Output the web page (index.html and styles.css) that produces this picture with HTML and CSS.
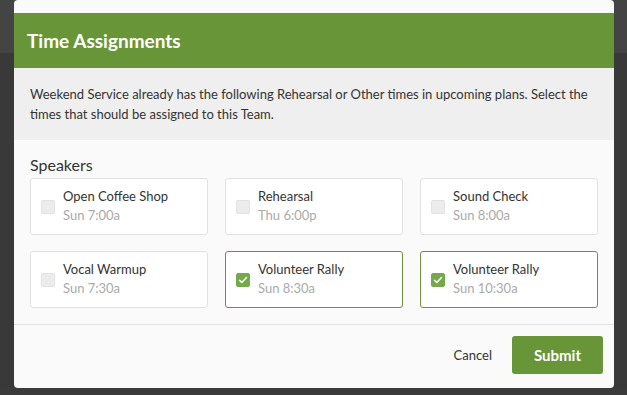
FILE: index.html
```html
<!DOCTYPE html>
<html lang="en">
<head>
    <meta charset="UTF-8">
    <meta name="viewport" content="width=device-width, initial-scale=1.0">
    <title>Time Assignments</title>
    <link rel="stylesheet" href="styles.css">
</head>
<body>
    <div class="topbar"></div>
    <div class="backdrop">
        <div class="modal">
            <div class="modal-header">
                <h2>Time Assignments</h2>
            </div>
            <div class="modal-note">
                Weekend Service already has the following Rehearsal or Other times in upcoming plans. Select the times that should be assigned to this Team.
            </div>
            <div class="modal-body">
                <div class="group-title">Speakers</div>
                <div class="time-grid">
                    <label class="time-card">
                        <span class="check"></span>
                        <span class="time-info">
                            <span class="time-name">Open Coffee Shop</span>
                            <span class="time-when">Sun 7:00a</span>
                        </span>
                    </label>
                    <label class="time-card">
                        <span class="check"></span>
                        <span class="time-info">
                            <span class="time-name">Rehearsal</span>
                            <span class="time-when">Thu 6:00p</span>
                        </span>
                    </label>
                    <label class="time-card">
                        <span class="check"></span>
                        <span class="time-info">
                            <span class="time-name">Sound Check</span>
                            <span class="time-when">Sun 8:00a</span>
                        </span>
                    </label>
                    <label class="time-card">
                        <span class="check"></span>
                        <span class="time-info">
                            <span class="time-name">Vocal Warmup</span>
                            <span class="time-when">Sun 7:30a</span>
                        </span>
                    </label>
                    <label class="time-card selected">
                        <span class="check">
                            <svg viewBox="0 0 14 14" width="14" height="14"><path d="M3.5 7.2l2.3 2.3 4.7-4.9" fill="none" stroke="#fff" stroke-width="1.5" stroke-linecap="round" stroke-linejoin="round"/></svg>
                        </span>
                        <span class="time-info">
                            <span class="time-name">Volunteer Rally</span>
                            <span class="time-when">Sun 8:30a</span>
                        </span>
                    </label>
                    <label class="time-card selected">
                        <span class="check">
                            <svg viewBox="0 0 14 14" width="14" height="14"><path d="M3.5 7.2l2.3 2.3 4.7-4.9" fill="none" stroke="#fff" stroke-width="1.5" stroke-linecap="round" stroke-linejoin="round"/></svg>
                        </span>
                        <span class="time-info">
                            <span class="time-name">Volunteer Rally</span>
                            <span class="time-when">Sun 10:30a</span>
                        </span>
                    </label>
                </div>
            </div>
            <div class="modal-footer">
                <button class="cancel-btn">Cancel</button>
                <button class="submit-btn">Submit</button>
            </div>
        </div>
    </div>
</body>
</html>
```

FILE: styles.css
```css
body {
    margin: 0;
    font-family: Lato, 'Open Sans', sans-serif;
    background-color: #3b3b3b;
    height: 395px;
    overflow: hidden;
}
.topbar {
    height: 13px;
    background: linear-gradient(to bottom, #1f2616, #262e1c);
}
.backdrop {
    padding: 0 13px 0 14px;
    background: linear-gradient(to bottom, #444 0, #444 53px, #393939 53px);
}
.modal {
    width: 600px;
    margin-top: -13px;
    position: relative;
    background-color: #fafafa;
    border-radius: 4px;
    overflow: hidden;
}
.modal-header {
    background-color: #679538;
    height: 55px;
    padding: 0 13px;
    display: flex;
    align-items: center;
    margin-top: 13px;
}
.modal-header h2 {
    margin: 0;
    color: white;
    font-size: 19px;
    font-weight: 700;
}
.modal-note {
    background-color: #efefef;
    color: #333;
    font-size: 13px;
    line-height: 20px;
    padding: 16px;
    height: 40px;
}
.modal-body {
    padding: 15px 16px 16px 16px;
    border-bottom: 1px solid #e2e2e2;
}
.group-title {
    font-size: 16px;
    color: #333;
    line-height: 20px;
    margin-bottom: 3px;
}
.time-grid {
    display: grid;
    grid-template-columns: repeat(3, 1fr);
    gap: 16px 17px;
}
.time-card {
    display: flex;
    align-items: center;
    gap: 8px;
    height: 55px;
    padding: 0 10px;
    background-color: white;
    border: 1px solid #e1e1e1;
    border-radius: 3px;
    cursor: pointer;
}
.time-card.selected {
    border-color: #679538;
}
.check {
    width: 14px;
    height: 14px;
    border-radius: 2px;
    background-color: #ececec;
    border: 1px solid #e2e2e2;
    box-sizing: border-box;
    flex-shrink: 0;
    display: flex;
}
.selected .check {
    background-color: #74aa4a;
    border-color: #74aa4a;
}
.check svg {
    margin: -1px;
}
.time-info {
    display: flex;
    flex-direction: column;
    margin-top: -3px;
}
.time-name {
    font-size: 13px;
    color: #333;
    line-height: 20px;
}
.time-when {
    font-size: 13px;
    color: #aaa;
    line-height: 19px;
}
.modal-footer {
    display: flex;
    justify-content: flex-end;
    align-items: center;
    gap: 10px;
    padding: 11px 11px 14px;
}
button {
    font-family: Lato, 'Open Sans', sans-serif;
    border: none;
    cursor: pointer;
}
.cancel-btn {
    background: none;
    color: #333;
    font-size: 13px;
    padding: 0 10px;
}
.submit-btn {
    background-color: #679538;
    color: white;
    font-size: 15px;
    font-weight: 700;
    width: 91px;
    height: 38px;
    border-radius: 3px;
}
```
